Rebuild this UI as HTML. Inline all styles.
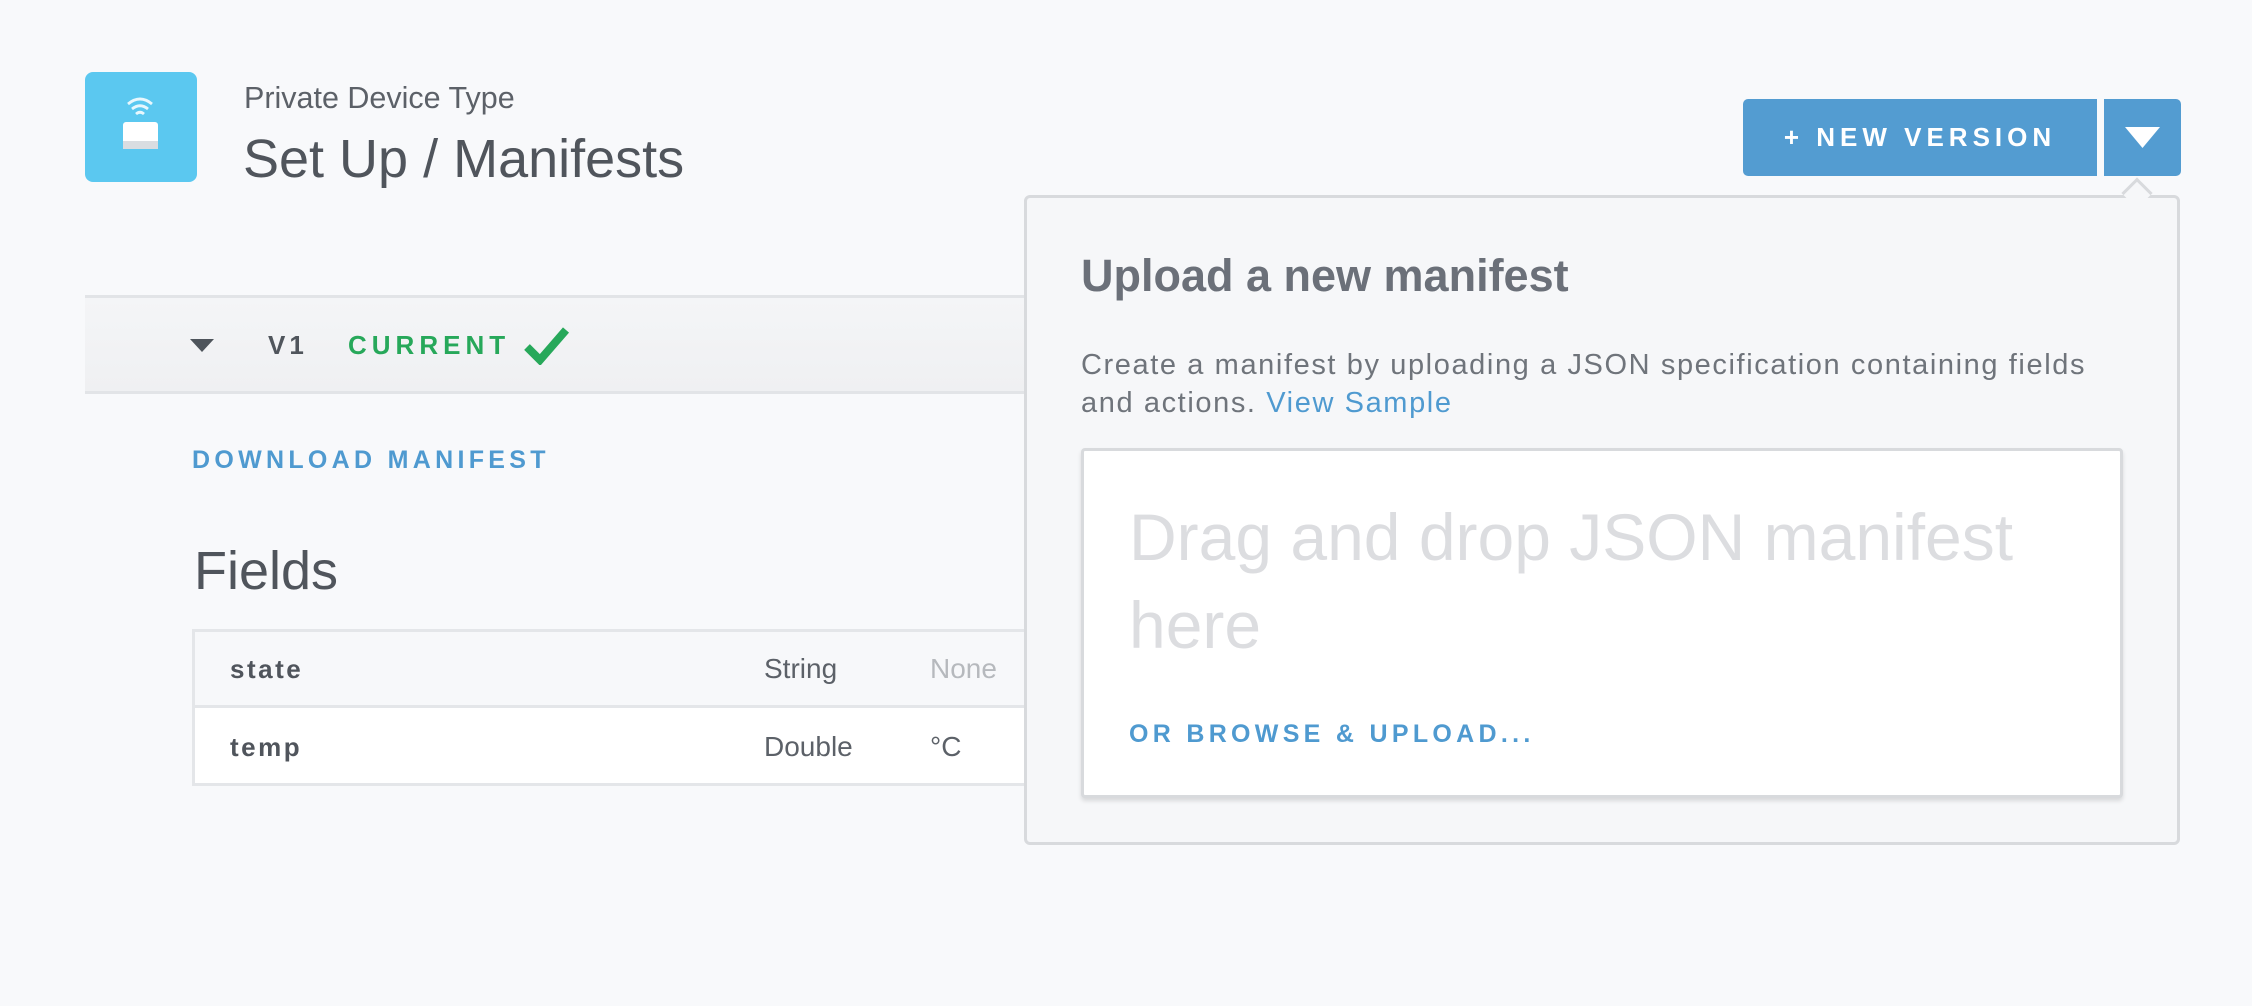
<!DOCTYPE html>
<html><head><meta charset="utf-8"><style>
*{margin:0;padding:0;box-sizing:border-box}
body{width:2252px;height:1006px;background:#f8f9fb;font-family:"Liberation Sans",sans-serif;position:relative;overflow:hidden;color:#5c6168}
.abs{position:absolute;white-space:nowrap}
</style></head><body>
<div class="abs" style="left:85px;top:72px;width:112px;height:110px;background:#5bc8f0;border-radius:8px">
<svg width="112" height="110" viewBox="0 0 112 110">
<path d="M43 32 Q55 22 67 32" stroke="#e8f7fd" stroke-width="2.8" fill="none"/>
<path d="M47 37 Q55 30.5 63 37" stroke="#e8f7fd" stroke-width="2.8" fill="none"/>
<path d="M51 42 Q55 38.5 59 42" stroke="#e8f7fd" stroke-width="2.8" fill="none"/>
<rect x="38" y="50" width="35" height="27" rx="3" fill="#fff"/>
<rect x="38" y="69" width="35" height="8" fill="#d9dde1"/>
</svg></div>
<div class="abs" style="left:244px;top:81px;font-size:30.5px;color:#5c6168">Private Device Type</div>
<div class="abs" style="left:243px;top:128px;font-size:54px;color:#50555c">Set Up / Manifests</div>

<div class="abs" style="left:1743px;top:99px;width:354px;height:77px;background:#539cd1;border-radius:5px 0 0 5px;color:#fff;font-weight:bold;font-size:26px;letter-spacing:5px;text-align:center;line-height:77px">+ NEW VERSION</div>
<div class="abs" style="left:2104px;top:99px;width:77px;height:77px;background:#539cd1;border-radius:0 5px 5px 0">
<svg width="77" height="77"><path d="M21 28 L56 28 L38.5 49Z" fill="#fff"/></svg></div>

<div class="abs" style="left:85px;top:295px;width:1000px;height:99px;background:linear-gradient(#f4f5f7,#eff0f2);border-top:3px solid #e2e4e7;border-bottom:3px solid #e2e4e7"></div>
<svg class="abs" style="left:190px;top:337px" width="28" height="18"><path d="M0 2 L24 2 L12 15Z" fill="#4e545b"/></svg>
<div class="abs" style="left:268px;top:330px;font-size:26px;font-weight:bold;letter-spacing:4px;color:#50555c">V1</div>
<div class="abs" style="left:348px;top:330px;font-size:26px;font-weight:bold;letter-spacing:5px;color:#27a85a">CURRENT</div>
<svg class="abs" style="left:524px;top:325px" width="46" height="40"><path d="M3 22 L16 35 L42 5" stroke="#27a85a" stroke-width="8" fill="none"/></svg>

<div class="abs" style="left:192px;top:446px;font-size:25px;font-weight:bold;letter-spacing:4.3px;color:#4f9ad0">DOWNLOAD MANIFEST</div>
<div class="abs" style="left:194px;top:540px;font-size:54px;color:#50555c">Fields</div>

<div class="abs" style="left:192px;top:629px;width:900px;height:157px;background:#fff;border:3px solid #e4e6e9">
<div style="height:76px;background:#f7f8fa;border-bottom:3px solid #e4e6e9"></div></div>
<div class="abs" style="left:230px;top:654px;font-size:26px;font-weight:bold;letter-spacing:2.5px;color:#50555c">state</div>
<div class="abs" style="left:764px;top:653px;font-size:28px;color:#5c6168">String</div>
<div class="abs" style="left:930px;top:653px;font-size:28px;color:#b6b9bd">None</div>
<div class="abs" style="left:230px;top:732px;font-size:26px;font-weight:bold;letter-spacing:2.5px;color:#50555c">temp</div>
<div class="abs" style="left:764px;top:731px;font-size:28px;color:#5c6168">Double</div>
<div class="abs" style="left:930px;top:731px;font-size:28px;color:#5c6168">°C</div>

<div class="abs" style="left:1024px;top:195px;width:1156px;height:650px;background:#f6f7f9;border:3px solid #d8dadd;border-radius:6px"></div>
<div class="abs" style="left:2126px;top:182px;width:22px;height:22px;background:#f6f7f9;border-left:3px solid #d8dadd;border-top:3px solid #d8dadd;transform:rotate(45deg)"></div>
<div class="abs" style="left:1081px;top:250px;font-size:45px;font-weight:bold;color:#6b7079">Upload a new manifest</div>
<div class="abs" style="left:1081px;top:346px;font-size:29px;letter-spacing:1.6px;color:#6f747b;line-height:38px">Create a manifest by uploading a JSON specification containing fields<br>and actions. <span style="color:#4f9ad0">View Sample</span></div>
<div class="abs" style="left:1081px;top:448px;width:1042px;height:350px;background:#fff;border:3px solid #d8dadd;border-radius:4px;box-shadow:0 3px 4px rgba(0,0,0,.12)"></div>
<div class="abs" style="left:1129px;top:493px;font-size:66px;font-weight:300;color:#dcdde0;line-height:88px">Drag and drop JSON manifest<br>here</div>
<div class="abs" style="left:1129px;top:720px;font-size:25px;font-weight:bold;letter-spacing:4.3px;color:#4f9ad0">OR BROWSE &amp; UPLOAD...</div>
</body></html>
